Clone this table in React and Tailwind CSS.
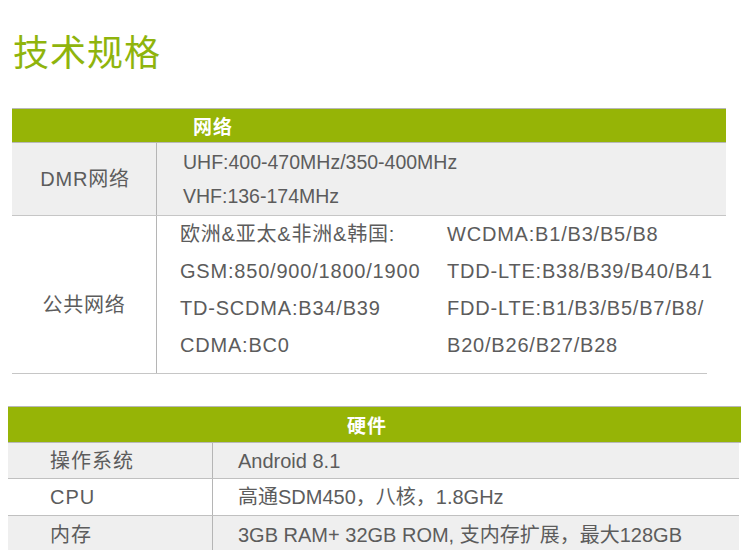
export default function App() {
  const font = "font-['Liberation_Sans','Noto_Sans_CJK_SC',sans-serif]";
  return (
    <div className={`w-[750px] h-[550px] bg-white overflow-hidden ${font} text-[#5c5c5c]`}>
      <h1 className="ml-[13px] pt-[35px] text-[36px] leading-[38px] text-[#8fb40c] tracking-[1px]">技术规格</h1>

      {/* 网络 table */}
      <div className="mt-[35px] ml-[12px] w-[714px] text-[20px] tracking-[0.8px]">
        <div className="h-[35px] pt-[3px] border-t border-b border-[#b8b8b8] bg-[#96b406] flex items-center">
          <span className="pl-[181px] text-[19px] font-bold text-white leading-none tracking-[1px]">网络</span>
        </div>
        <div className="flex bg-[#efefef] border-b border-[#c6c6c6] h-[73px]">
          <div className="w-[145px] pl-[2px] border-r border-[#b5b5b5] flex items-center justify-center">DMR网络</div>
          <div className="pl-[26px] pt-[2px] leading-[34px] text-[19.5px] tracking-normal">
            <div>UHF:400-470MHz/350-400MHz</div>
            <div>VHF:136-174MHz</div>
          </div>
        </div>
        <div className="flex h-[157px] leading-[37px]">
          <div className="w-[145px] pt-[22px] border-r border-[#b5b5b5] flex items-center justify-center">公共网络</div>
          <div className="pl-[23px] w-[290px]">
            <div>欧洲&amp;亚太&amp;非洲&amp;韩国:</div>
            <div>GSM:850/900/1800/1900</div>
            <div>TD-SCDMA:B34/B39</div>
            <div>CDMA:BC0</div>
          </div>
          <div>
            <div>WCDMA:B1/B3/B5/B8</div>
            <div>TDD-LTE:B38/B39/B40/B41</div>
            <div>FDD-LTE:B1/B3/B5/B7/B8/</div>
            <div>B20/B26/B27/B28</div>
          </div>
        </div>
        <div className="w-[695px] h-px bg-[#c6c6c6]"></div>
      </div>

      {/* 硬件 table */}
      <div className="mt-[32px] ml-[8px] w-[733px] text-[20px]">
        <div className="h-[37px] pt-[4px] border-t border-b border-[#b8b8b8] bg-[#96b406] flex items-center">
          <span className="pl-[339px] text-[19px] font-bold text-white leading-none tracking-[1px]">硬件</span>
        </div>
        <div className="flex h-[36px] bg-[#efefef] border-b border-[#c0c0c0] mr-[2px]">
          <div className="w-[205px] border-r border-[#b5b5b5] pl-[42px] flex items-center tracking-[1px]">操作系统</div>
          <div className="pl-[25px] flex items-center">Android 8.1</div>
        </div>
        <div className="flex h-[37px] bg-white border-b border-[#c0c0c0] mr-[2px]">
          <div className="w-[205px] border-r border-[#b5b5b5] pl-[42px] flex items-center tracking-[1px]">CPU</div>
          <div className="pl-[25px] flex items-center">高通SDM450，八核，1.8GHz</div>
        </div>
        <div className="flex h-[37px] bg-[#efefef] mr-[2px]">
          <div className="w-[205px] border-r border-[#b5b5b5] pl-[42px] flex items-center tracking-[1px]">内存</div>
          <div className="pl-[25px] flex items-center">3GB RAM+ 32GB ROM, 支内存扩展，最大128GB</div>
        </div>
      </div>
    </div>
  );
}
